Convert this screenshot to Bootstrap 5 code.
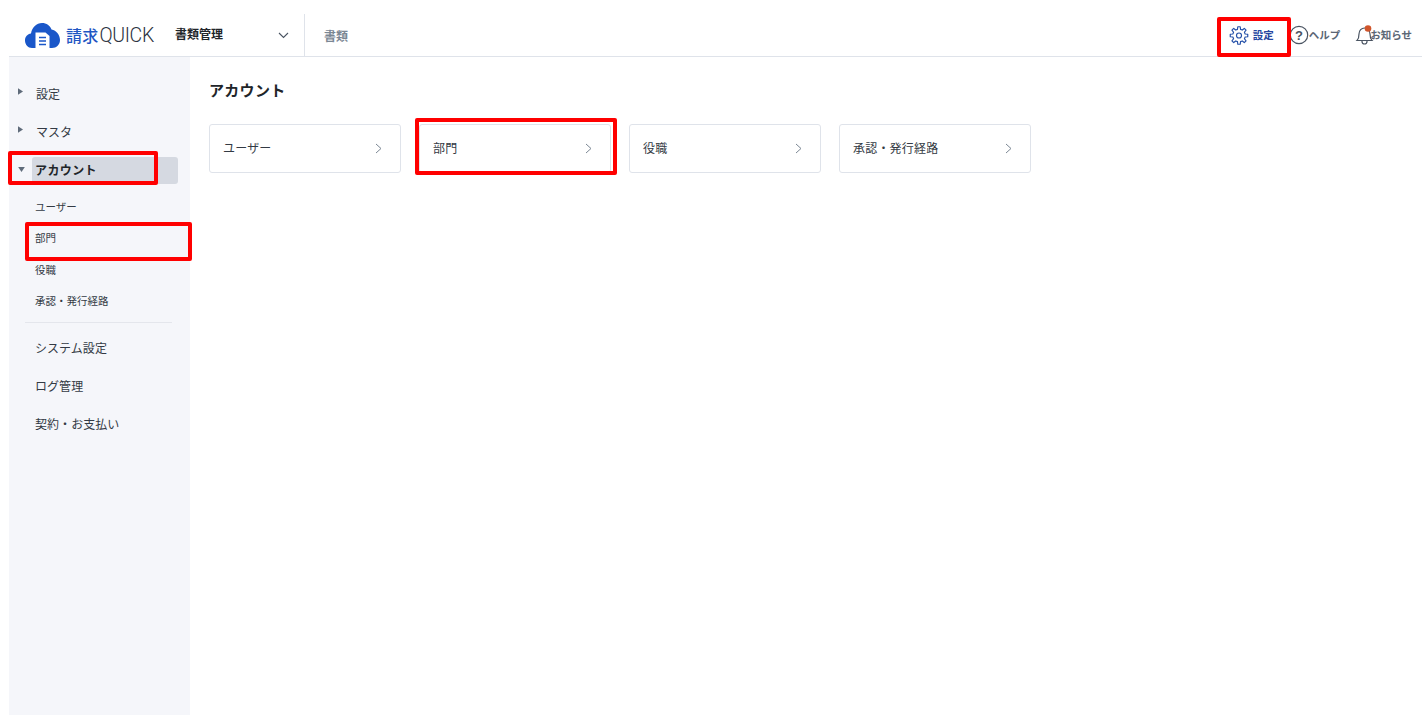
<!DOCTYPE html>
<html lang="ja">
<head>
<meta charset="utf-8">
<title>請求QUICK</title>
<link href="https://cdn.jsdelivr.net/npm/bootstrap@5.3.0/dist/css/bootstrap.min.css" rel="stylesheet">
<style>
html,body{height:724px;overflow:hidden;background:#fff}
body{font-family:"Noto Sans CJK JP","Noto Sans",sans-serif;color:#212529;position:relative}
.app-shell{margin:0 0 0 9px;width:1413px;height:715px;display:flex;flex-direction:column}
.top-bar{height:57px;border-bottom:1px solid #dfe3ea;padding-top:14px;flex:none}
.logo-box{width:146px;margin-left:16px;height:42px;padding-top:9px;gap:6px}
.logo-text{line-height:25px;white-space:nowrap;color:#2b3240}
.logo-text b{font-weight:500;color:#1f56c3;font-size:16px;letter-spacing:.2px}
.logo-text i{font-style:normal;font-family:Roboto,sans-serif;font-weight:300;font-size:19.5px;letter-spacing:-.35px;margin-left:1px}
.module-pick{width:134px;height:42px;border-right:1px solid #dfe3ea;font-size:12px;font-weight:700;padding:0 15px 0 4px;color:#212529}
.module-pick span{margin-bottom:2px}
.doc-tab{font-size:12px;font-weight:700;color:#7b8794;padding-left:19px;line-height:44px}
.top-tool{font-size:10.5px;font-weight:700;color:#5b6675;white-space:nowrap;height:42px}
.top-tool.on{color:#2546a0}
.top-tool .bell-ico{margin-right:-4px;position:relative}
.tool-row{padding-right:10px;gap:15px}
.side-pane{width:181px;background:#f5f6fa;flex:none;padding-top:18px}
.side-item{height:38px;font-size:12px;color:#333a44;display:flex;align-items:center;letter-spacing:.05px}
.side-arrow{width:27px;flex:none;padding-left:9px;display:flex;margin-top:-5px}
.side-active{font-weight:700;height:27px;margin:6px 12px 7px 23px;background:#d5d9e1;border-radius:3px;padding:0 0 2px 3px;font-size:12px;letter-spacing:.4px;color:#212529;position:relative}
.side-active .side-arrow{position:absolute;left:-23px;top:10px;margin:0}
.side-sub{font-size:10.5px;height:31.4px;padding-left:26px;display:flex;align-items:center;color:#333a44}
.side-plain{padding-left:26px}
.side-rule{margin:5px 18px 6px 16px;border-top:1px solid #e4e6ec;height:0}
.main-pane{padding:17px 0 0 19px}
.page-title{font-size:15px;font-weight:700;line-height:32px;letter-spacing:.3px;margin:0 0 18px}
.tile{width:192px;height:49px;border:1px solid #dfe3ea;border-radius:3px;background:#fff;font-size:12px;padding:0 18px 1px 13px;color:#333a44;text-decoration:none;letter-spacing:.2px}
.tile-gap{gap:18px}
.red-box{position:absolute;border:4px solid #f00;border-radius:2px;pointer-events:none}
.box-a{left:1217px;top:17px;width:74px;height:40px}
.box-b{left:8px;top:151px;width:150px;height:34px}
.box-c{left:25px;top:222px;width:167px;height:39px}
.box-d{left:415px;top:118px;width:202px;height:57px}
</style>
</head>
<body>
<div class="app-shell">
  <header class="top-bar d-flex">
    <div class="logo-box d-flex align-items-start">
      <svg width="35" height="25" viewBox="0 0 35 25"><path fill="#1a57c9" d="M7 25C3 25 0 21.500 0 17.500 0 13.500 2.500 11 6 10.500 7 4.500 11.500 0 17 0c4.500 0 8 2.500 9.500 6.500C31.500 7.500 35 12 35 17c0 4.500-3.500 8-8 8Z"/><path fill="#fff" d="M10.500 9.500h10l4 3.500V25H10.500Z"/><path stroke="#1a57c9" stroke-width="1.700" d="M14 14.500h7M14 18h7M14 21.500h7"/></svg>
      <span class="logo-text"><b>請求</b><i>QUICK</i></span>
    </div>
    <div class="module-pick d-flex align-items-center justify-content-between">
      <span>書類管理</span>
      <svg width="11" height="7" viewBox="0 0 11 7"><path d="M1 1l4.500 4.500L10 1" fill="none" stroke="#4a5462" stroke-width="1.100"/></svg>
    </div>
    <div class="doc-tab">書類</div>
    <div class="tool-row ms-auto d-flex align-items-start">
      <div class="top-tool on d-flex align-items-center gap-1">
        <svg width="20" height="21" viewBox="0 0 24 24" fill="none" stroke="#2450a8" stroke-width="1.400" stroke-linejoin="round"><circle cx="12" cy="12" r="3"/><path d="M10.160 4.630 10.530 1.500H13.470L13.840 4.630 15.910 5.490 18.380 3.530 20.470 5.620 18.510 8.090 19.370 10.160 22.500 10.530V13.470L19.370 13.840 18.510 15.910 20.470 18.380 18.380 20.470 15.910 18.510 13.840 19.370 13.470 22.500H10.530L10.160 19.370 8.090 18.510 5.620 20.470 3.530 18.380 5.490 15.910 4.630 13.840 1.500 13.470V10.530L4.630 10.160 5.490 8.090 3.530 5.620 5.620 3.530 8.090 5.490Z"/></svg>
        <span>設定</span>
      </div>
      <div class="top-tool d-flex align-items-center">
        <svg width="20" height="20" viewBox="0 0 20 20"><circle cx="10" cy="10" r="8.700" fill="none" stroke="#4a5462" stroke-width="1.200"/><text x="10" y="14.500" text-anchor="middle" font-size="13" font-weight="700" fill="#4a5462" font-family="Liberation Sans">?</text></svg>
        <span>ヘルプ</span>
      </div>
      <div class="top-tool d-flex align-items-center">
        <svg class="bell-ico" width="19" height="20" viewBox="0 0 19 20" fill="none" stroke="#4a5462" stroke-width="1.200"><path d="M2 15.500c1.500-1.500 2-2.500 2-6.500 0-3.500 2.500-6 5.500-6s5.500 2.500 5.500 6c0 4 .5 5 2 6.500Z"/><path d="M7 15.500v1a2.500 2.500 0 0 0 5 0v-1"/><circle cx="13" cy="3.500" r="3.300" fill="#d0552b" stroke="none"/></svg>
        <span>お知らせ</span>
      </div>
    </div>
  </header>
  <div class="d-flex flex-grow-1">
    <nav class="side-pane">
      <div class="side-item"><span class="side-arrow"><svg width="5" height="7" viewBox="0 0 6 8"><path d="M0 0l6 4-6 4Z" fill="#5f6b7a"/></svg></span><span>設定</span></div>
      <div class="side-item"><span class="side-arrow"><svg width="5" height="7" viewBox="0 0 6 8"><path d="M0 0l6 4-6 4Z" fill="#5f6b7a"/></svg></span><span>マスタ</span></div>
      <div class="side-item side-active"><span class="side-arrow"><svg width="7" height="5" viewBox="0 0 8 6"><path d="M0 0h8L4 6Z" fill="#5f6b7a"/></svg></span><span>アカウント</span></div>
      <div class="side-sub">ユーザー</div>
      <div class="side-sub">部門</div>
      <div class="side-sub">役職</div>
      <div class="side-sub">承認・発行経路</div>
      <div class="side-rule"></div>
      <div class="side-item side-plain">システム設定</div>
      <div class="side-item side-plain">ログ管理</div>
      <div class="side-item side-plain">契約・お支払い</div>
    </nav>
    <main class="main-pane flex-grow-1">
      <h1 class="page-title">アカウント</h1>
      <div class="d-flex tile-gap">
        <a class="tile d-flex align-items-center justify-content-between" href="#"><span>ユーザー</span><svg width="7" height="11" viewBox="0 0 7 11"><path d="M1 1l5 4.500L1 10" fill="none" stroke="#7b8794"/></svg></a>
        <a class="tile d-flex align-items-center justify-content-between" href="#"><span>部門</span><svg width="7" height="11" viewBox="0 0 7 11"><path d="M1 1l5 4.500L1 10" fill="none" stroke="#7b8794"/></svg></a>
        <a class="tile d-flex align-items-center justify-content-between" href="#"><span>役職</span><svg width="7" height="11" viewBox="0 0 7 11"><path d="M1 1l5 4.500L1 10" fill="none" stroke="#7b8794"/></svg></a>
        <a class="tile d-flex align-items-center justify-content-between" href="#"><span>承認・発行経路</span><svg width="7" height="11" viewBox="0 0 7 11"><path d="M1 1l5 4.500L1 10" fill="none" stroke="#7b8794"/></svg></a>
      </div>
    </main>
  </div>
</div>
<div class="red-box box-a"></div>
<div class="red-box box-b"></div>
<div class="red-box box-c"></div>
<div class="red-box box-d"></div>
<script src="https://cdn.jsdelivr.net/npm/bootstrap@5.3.0/dist/js/bootstrap.bundle.min.js"></script>
</body>
</html>
